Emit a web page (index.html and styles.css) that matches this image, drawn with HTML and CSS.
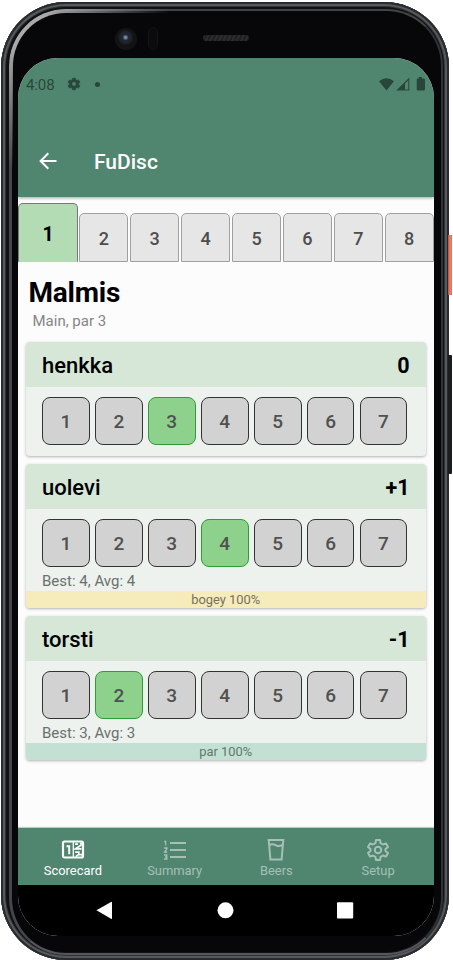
FILE: index.html
```html
<!DOCTYPE html>
<html lang="en">
<head>
<meta charset="utf-8">
<title>FuDisc</title>
<link rel="stylesheet" href="styles.css">
</head>
<body>
<div class="phone">
  <span class="power"></span><span class="volume"></span>
  <div class="rim"></div><div class="glint"></div>
  <div class="camera"></div><div class="sensor"></div><div class="speaker"></div>
  <div class="screen">
    <header class="appbar">
      <div class="status">
        <span class="time">4:08</span>
        <svg class="cog" viewBox="0 0 24 24"><path fill="currentColor" stroke="currentColor" fill-rule="evenodd" d="M9.5 2h5l.5 3 2 1.1 2.8-1.1 2.5 4.2-2.4 1.9v1.8l2.4 1.9-2.5 4.2-2.8-1.1-2 1.1-.5 3h-5L9 19l-2-1.1L4.200 19l-2.500-4.200 2.400-1.900v-1.800L1.700 9.200 4.200 5 7 6.100 9 5zM12 8.300a3.700 3.700 0 1 0 0 7.400 3.700 3.700 0 0 0 0-7.400z"/></svg>
        <span class="dot"></span>
        <svg class="signals" viewBox="0 0 48 16"><g fill="currentColor"><path d="M0 4.200Q7.500-1.700 15 4.200L7.500 13.500z"/><path fill-rule="evenodd" d="M17.300 13.500 30.300.5v13zM26 6.500v6h3.300V3.200z"/><path d="M38 1.500h1.700V0h3.200v1.500h1.700q1.400 0 1.400 1.200v9.600q0 1.200-1.400 1.200H39q-1.300 0-1.300-1.200V2.700Q37.700 1.500 39 1.500z"/></g></svg>
      </div>
      <div class="toolbar">
        <svg class="back" viewBox="0 0 18 18"><path d="M17.500 9H2M9.300 1.300 1.600 9l7.700 7.700" fill="none" stroke="#fff" stroke-width="2"/></svg>
        <h1>FuDisc</h1>
      </div>
    </header>
    <nav class="holes">
      <span class="hole current">1</span><span class="hole">2</span><span class="hole">3</span><span class="hole">4</span><span class="hole">5</span><span class="hole">6</span><span class="hole">7</span><span class="hole">8</span>
    </nav>
    <main>
      <h2>Malmis</h2>
      <p class="par">Main, par 3</p>
      <section class="card">
        <div class="player"><span>henkka</span><b>0</b></div>
        <div class="scores"><span>1</span><span>2</span><span class="picked">3</span><span>4</span><span>5</span><span>6</span><span>7</span></div>
      </section>
      <section class="card">
        <div class="player"><span>uolevi</span><b>+1</b></div>
        <div class="scores"><span>1</span><span>2</span><span>3</span><span class="picked">4</span><span>5</span><span>6</span><span>7</span></div>
        <p class="best">Best: 4, Avg: 4</p>
        <div class="result bogey">bogey 100%</div>
      </section>
      <section class="card">
        <div class="player"><span>torsti</span><b>-1</b></div>
        <div class="scores"><span>1</span><span class="picked">2</span><span>3</span><span>4</span><span>5</span><span>6</span><span>7</span></div>
        <p class="best">Best: 3, Avg: 3</p>
        <div class="result parred">par 100%</div>
      </section>
    </main>
    <nav class="tabs">
      <div class="tab active">
        <svg viewBox="0 0 24 24"><g fill="none" stroke="currentColor"><rect x="2" y="3.500" width="20" height="16" rx="1.500" stroke-width="2.200"/><path stroke-width="1.300" d="M12.300 4v16"/><path stroke-width="2" d="M5.500 8.200h2.700v8"/><path stroke-width="1.700" d="M14 6.200h3M20 4.500v2.800l-5.500 3.500h6M14.200 14.200h3.600v2.200l-3 2.300M18 16.700h3"/></g></svg>
        <span>Scorecard</span>
      </div>
      <div class="tab">
        <svg viewBox="0 0 24 24"><g fill="none" stroke="currentColor"><path stroke-width="2" d="M7 5h16M7 12h16M7 19h16"/><path stroke-width="1.300" d="M1.200 3.500h1.400v4M1 10h3v.6L1.500 14H4.200M1 17h2.800v4H1M2 19h1.800"/></g></svg>
        <span>Summary</span>
      </div>
      <div class="tab">
        <svg viewBox="0 0 24 24"><path fill="none" stroke="currentColor" stroke-width="2" d="M4.700 2h14.600L17.600 21.500H6.400zM5.200 7.100c3-2 5-.8 6.800.2s3.800 1.200 6.700-.7"/></svg>
        <span>Beers</span>
      </div>
      <div class="tab">
        <svg viewBox="0 0 24 24"><g fill="none" stroke="currentColor" stroke-width="2"><path stroke-linejoin="round" d="M10 2h4l.6 3.200 2.300 1.300L20 5.400l2 3.500-2.500 2.100v2l2.500 2.100-2 3.500-3.100-1.100-2.300 1.300L14 22h-4l-.6-3.200-2.300-1.300L4 18.600l-2-3.500L4.500 13v-2L2 8.900l2-3.500 3.100 1.100 2.300-1.300z"/><circle cx="12" cy="12" r="3.200"/></g></svg>
        <span>Setup</span>
      </div>
    </nav>
    <div class="system">
      <svg viewBox="0 0 416 51"><g fill="#fff"><path d="M78.500 25.300 93 17q1-.5 1 .5v15.800q0 1-1 .5z"/><circle cx="207.500" cy="25.300" r="8"/><rect x="319" y="17.300" width="16.200" height="16.300" rx="1"/></g></svg>
    </div>
  </div>
</div>
</body>
</html>
```

FILE: styles.css
```css
* { box-sizing: border-box; }
body { margin: 0; width: 453px; height: 963px; overflow: hidden; background: #fff; font-family: Roboto, sans-serif; }
h1, h2, p { margin: 0; }
.phone {
  position: relative; width: 448px; height: 958px; margin: 2px 0 0 1px; padding: 56px 15px 24px 17px;
  border-radius: 65px; background: #070709;
  box-shadow: inset 0 0 0 2px #292b2d, inset 0 0 0 4px #55585c, inset 0 0 0 5px #303235, inset 0 0 0 8px #101113;
}
.rim {
  position: absolute; inset: 7px 6px 5px 8px; border-radius: 57px;
  border: solid; border-width: 2px 2px 2px 3px; border-color: #444 #303235 #58565a #454649;
}
.glint {
  position: absolute; left: 8px; top: 7px; width: 190px; height: 190px; border-radius: 57px 0 0 0;
  border: solid #aaa; border-width: 4px 0 0 4px;
  -webkit-mask-image: radial-gradient(circle at 12px 12px, #000 25px, transparent 150px);
  mask-image: radial-gradient(circle at 12px 12px, #000 25px, transparent 150px);
}
.power, .volume { position: absolute; right: -3px; }
.power { top: 233px; width: 4px; height: 60px; background: linear-gradient(90deg, #b94e3a, #f08068 50%, #e5705a); }
.volume { top: 353px; width: 4px; height: 119px; border-radius: 1px; background: #1b1c1e; }
.camera { position: absolute; left: 114px; top: 26px; width: 22px; height: 22px; border-radius: 50%; background: radial-gradient(circle at 48% 43%, #7886a0 0 1px, #20283c 3px, #202123 6px, #131315 8px); }
.sensor { position: absolute; left: 147px; top: 25px; width: 10px; height: 23px; border: 1px solid #131315; border-radius: 5px; background: #0b0b0d; }
.speaker { position: absolute; left: 202px; top: 33px; width: 46px; height: 6px; border-radius: 3px; background: repeating-linear-gradient(115deg, #2c2c2c 0 2px, #202020 2px 4px); }
.screen { position: relative; width: 416px; height: 878px; display: flex; flex-direction: column; overflow: hidden; border-radius: 40px; background: #fcfcfc; }
.appbar { height: 139px; flex: none; background: #508670; box-shadow: 0 1px 3px rgba(0,0,0,.35); z-index: 1; }
.status { height: 52px; display: flex; align-items: center; color: #28463a; padding: 0 8px; }
.time { width: 41px; padding-top: 1px; font-size: 15px; letter-spacing: -.1px; }
.cog { width: 14px; height: 14px; }
.dot { width: 5px; height: 5px; margin-left: 14px; border-radius: 50%; background: currentColor; }
.signals { width: 48px; height: 16px; margin: 1px 0 0 auto; transform: translateX(1px); }
.toolbar { height: 87px; display: flex; align-items: center; padding: 15px 0 0 21px; color: #fff; }
.back { width: 18px; height: 18px; }
h1 { margin-left: 37px; padding-top: 2px; font-size: 21px; font-weight: 500; line-height: 26px; }
.holes { height: 65px; flex: none; display: flex; align-items: flex-end; gap: 1.800px; }
.hole { width: 49.100px; height: 49px; flex: none; display: flex; align-items: center; justify-content: center; padding-top: 1px; border: 1px solid #a0a0a0; border-radius: 5px 5px 0 0; background: #e6e6e6; color: #4d4d4d; font-size: 18px; font-weight: 500; }
.current { width: 60px; height: 59px; margin-right: -.5px; padding-top: 3px; border-color: #777 #777 #b3dcb5; background: #b3dcb5; color: #000; font-size: 19.500px; font-weight: 700; }
main { flex: 1; padding: 14px 8px 0; }
h2 { padding-left: 2.500px; font-size: 28px; letter-spacing: -.2px; line-height: 34px; font-weight: 700; }
.par { padding-left: 6.500px; font-size: 15px; line-height: 20px; height: 32px; padding-top: 1px; color: #858585; }
.card { margin-bottom: 8px; border-radius: 4px; overflow: hidden; width: 399.500px; background: #edf2ee; box-shadow: 0 1px 3px rgba(0,0,0,.3); }
.player { height: 45px; display: flex; align-items: center; justify-content: space-between; padding: 2px 16px 0; background: #d6e7d8; color: #000; font-size: 22px; font-weight: 500; }
.player b { font-weight: 700; font-size: 21.500px; }
.scores { height: 69px; display: flex; gap: 5.200px; padding: 10px 16px 11px; }
.scores span { width: 47.750px; height: 48px; display: flex; align-items: center; justify-content: center; padding-top: 1px; border: 1px solid #333; border-radius: 8px; background: #d2d2d2; color: #505050; font-size: 19px; font-weight: 500; }
.scores .picked { border-color: #2d9d35; background: #8ed18c; }
.best { height: 21px; margin-top: -8px; padding: 1px 0 0 16px; font-size: 15px; line-height: 21px; color: #6b706d; }
.result { height: 17px; text-align: center; font-size: 12.900px; line-height: 18px; color: #77715d; }
.bogey { background: #f6ebba; }
.parred { background: #c3e0d4; color: #62776d; }
.tabs { height: 57px; flex: none; display: flex; padding: 0 5px 0 4px; background: #508670; color: #a5c0b5; box-shadow: 0 -1px 1px rgba(0,0,0,.2); }
.tab { flex: 1; display: flex; flex-direction: column; align-items: center; padding-top: 9.500px; font-size: 12.900px; line-height: 16px; }
.tab svg { width: 24px; height: 24px; margin-bottom: 1.500px; }
.active { color: #fff; }
.system { height: 51px; flex: none; background: #000; }
.system svg { display: block; width: 416px; height: 51px; }
```
